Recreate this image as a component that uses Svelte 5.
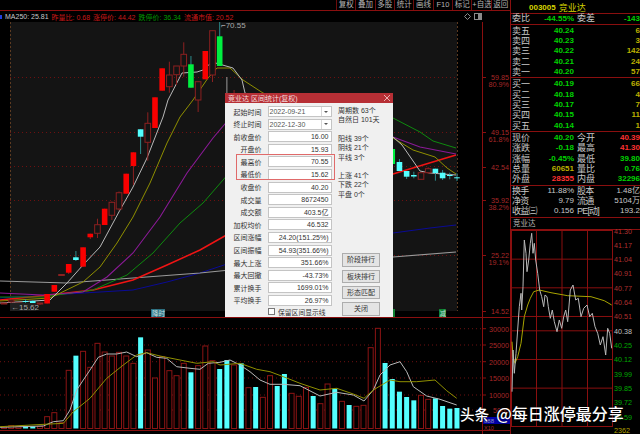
<script>
  // toolbar + legend
  const tools = ["复权", "叠加", "多股", "统计", "画线", "F10", "标记", "+自选", "返回"];

  const sells = [["卖五", "40.24", "6"], ["卖四", "40.23", "3"], ["卖三", "40.22", "142"], ["卖二", "40.21", "24"], ["卖一", "40.20", "57"]];
  const buys = [["买一", "40.19", "66"], ["买二", "40.18", "4"], ["买三", "40.17", "7"], ["买四", "40.15", "11"], ["买五", "40.14", "1"]];
  const stats = [
    ["现价", "40.20", "g", "今开", "40.39", "r"],
    ["涨跌", "-0.18", "g", "最高", "41.30", "r"],
    ["涨幅", "-0.45%", "g", "最低", "39.80", "g"],
    ["总量", "60651", "y", "量比", "0.76", "g"],
    ["外盘", "28355", "r", "内盘", "32296", "g"],
  ];
  const extra = [
    ["换手", "11.88%", "股本", "1.48亿"],
    ["净资", "9.79", "流通", "5104万"],
    ["收益㈢", "0.156", "PE[动]", "193.2"],
  ];

  // dialog
  const fields = [
    ["前收盘价", "16.00"], ["开盘价", "15.93"], ["最高价", "70.55"], ["最低价", "15.62"],
    ["收盘价", "40.20"], ["成交量", "8672450"], ["成交额", "403.5亿"], ["加权均价", "46.532"],
    ["区间涨幅", "24.20(151.25%)"], ["区间振幅", "54.93(351.66%)"], ["最大上涨", "351.66%"],
    ["最大回撤", "-43.73%"], ["累计换手", "1699.01%"], ["平均换手", "26.97%"],
  ];
  const statGroups = [
    ["周期数 63个", "自然日 101天"],
    ["阳线 39个", "阴线 21个", "平线 3个"],
    ["上涨 41个", "下跌 22个", "平盘 0个"],
  ];
  const actions = ["阶段排行", "板块排行", "形态匹配", "关闭"];

  const barX = (i) => 4 + 7.19 * i;

  // [index, body top, body bottom, wick top, wick bottom, kind]
  const candles = [
    [0, 303, 304, 303, 304, "h"], [1, 300, 302, 299, 304, "h"], [2, 303, 304, 303, 304, "h"],
    [3, 301, 302, 299, 304, "c"], [4, 301, 303, 300, 304, "c"], [5, 303, 304, 303, 305, "h"],
    [6, 294, 303.5, 294, 303.5, "s"], [7, 285, 291.7, 285, 291.7, "s"], [8, 274.5, 275.5, 274.5, 275.5, "h"],
    [9, 264, 272.7, 264, 274, "s"], [10, 257.3, 260, 251, 261, "c"], [11, 247.3, 266.7, 247.3, 266.7, "s"],
    [12, 233.7, 237.3, 233.7, 239, "s"], [13, 224.7, 233.3, 218.7, 238, "h"], [14, 208.7, 225, 208.7, 225, "s"],
    [15, 202.3, 215.3, 201.5, 220, "h"], [16, 192.7, 209, 191.5, 210.5, "h"], [17, 173.7, 193.7, 173.7, 193.7, "s"],
    [18, 152.3, 166, 152.3, 185, "s"], [19, 129.3, 136.7, 129.3, 154, "c"], [20, 123.3, 142.3, 112.3, 160.7, "h"],
    [21, 97.3, 128, 97.3, 128, "s"], [22, 68.3, 90.7, 68.3, 90.7, "s"], [23, 75, 86.7, 61.7, 92.7, "h"],
    [24, 66, 74.7, 66, 85, "h"], [25, 54.3, 66, 42.3, 76.7, "h"], [26, 64.3, 87.7, 56, 87.7, "g"],
    [27, 81.7, 100, 81.7, 112, "h"], [28, 51, 79.3, 51, 79.3, "s"], [29, 30.7, 75, 30.7, 82, "h"],
    [30, 36.3, 66, 21.7, 66, "g"], [31, 110, 120, 77, 125, "w"], [32, 100, 110, 90, 112, "h"],
    [54, 149, 164, 145, 164, "g"], [55, 162, 171, 159, 171, "c"], [56, 171, 176.7, 171, 179, "c"],
    [57, 175, 176.5, 171.7, 178.3, "c"], [58, 172.7, 179.3, 172.7, 179.3, "h"], [59, 168.7, 172.7, 167.3, 174, "h"],
    [60, 168.7, 173, 168.7, 180.7, "c"], [61, 172.7, 178.3, 170, 180, "c"], [62, 175, 176, 172.7, 179.3, "c"],
    [63, 177.3, 178.3, 173.3, 181, "c"],
  ];

  // main chart averages, screen coordinates; the dialog hides the middle part
  const ma = [
    { cls: "l-blue", w: 1, pts: "0,298 67,294 133,290 167,282 200,273 230,263 393,233 430,228 456,225" },
    { cls: "l-grey", w: 1.2, pts: "0,281 67,283 133,278 200,273 230,270 393,257 456,252" },
    { cls: "l-red", w: 1.5, pts: "0,300 50,295 93,290 133,280 167,265 200,250 230,233 393,174 456,155" },
    { cls: "l-green", w: 1, pts: "0,297 43,297 93,290 127,275 153,253 180,223 203,203 230,172 300,110 393,118 420,132 433,141 456,148" },
    { cls: "l-purple", w: 1.1, pts: "0,293 43,295 83,292 107,277 133,253 160,217 187,173 213,138 230,118 300,100 393,137 420,147 456,154" },
    { cls: "l-olive", w: 1, pts: "0,301 50,298 83,282 100,267 117,243 133,217 150,183 167,143 180,117 193,100 208,78 217,68 230,68 243,80 263,93 330,118 393,138 413,150 435,157 447,168 456,174" },
    { cls: "l-white", w: 1, pts: "0,303 50,300 67,283 83,265 100,247 120,210 133,187 147,158 163,117 168,100 182,73 197,72 203,70 212,62 233,68 242,80 245,93 280,110 393,137 402,145 420,171 430,173 456,175" },
  ];

  const mainGrid = [77, 132, 166, 200, 255];
  const mainAxis = [
    ["59.85", 77, "80.9%", 83.5], ["49.15", 132, "61.8%", 138.5], ["42.54", 167], ["35.92", 200, "38.2%", 206.5],
    ["25.22", 255, "19.1%", 261.5], ["14.52", 311],
  ];

  // volume bars: top in screen px, c = falling
  const volTops = [
    [380], [377], [380], [378, 1], [379, 1], [379], [350], [338], [368], [211], [167, 1], [154], [202], [130], [156], [168],
    [157], [168], [190], [112, 1], [150], [234], [170], [212], [227], [190], [217, 1], [197], [138], [182], [207, 1], [180, 1],
    [195], [190, 1], [263], [261, 1], [292], [227], [258, 1], [222, 1], [280], [289], [262], [288, 1], [311], [252], [266, 1],
    [304], [315, 1], [319], [316], [143], [85], [189, 1], [237, 1], [275, 1], [291, 1], [301, 1], [286], [298], [295, 1],
    [318, 1], [326, 1], [324, 1],
  ].map(([t, c], i) => ({ x: barX(i), top: 300 + t / 3, c: !!c }));

  const volGrid = [["30000", 328.7], ["25000", 345], ["20000", 361.7], ["15000", 378], ["10000", 395], ["5000", 410]];

  // zoomed readings converted back to screen px
  const scale = (list, dx, dy) => list.map(([x, y]) => `${(dx + x / 3).toFixed(1)},${(dy + y / 3).toFixed(1)}`).join(" ");

  const volWhite = scale([[0,382],[130,378],[160,365],[190,362],[210,330],[230,270],[250,240],[270,210],[295,172],[320,162],[350,162],[380,156],[410,170],[440,158],[470,172],[500,175],[530,200],[570,205],[600,208],[625,190],[660,187],[690,180],[720,195],[750,215],[780,240],[810,253],[850,253],[900,257],[960,288],[1010,277],[1060,285],[1092,303],[1120,270],[1140,225],[1170,195],[1200,185],[1220,215],[1240,260],[1280,288],[1320,298],[1370,315]], 0, 300);
  const volOlive = scale([[0,380],[150,372],[190,370],[220,335],[270,295],[320,235],[370,195],[410,165],[440,158],[480,168],[540,180],[590,190],[640,185],[660,195],[720,190],[770,208],[810,215],[850,230],[900,250],[960,270],[1010,265],[1060,282],[1092,295],[1120,270],[1170,240],[1200,245],[1250,245],[1305,240],[1340,272],[1370,295]], 0, 300);

  // intraday panel, screen px minus the panel origin (510, 230)
  const dayPrice = scale([[63,545],[66,420],[70,490],[75,430],[85,290],[90,250],[92,300],[96,230],[100,90],[105,130],[108,185],[113,150],[118,100],[122,70],[126,130],[130,100],[134,150],[140,190],[146,240],[152,260],[158,290],[162,255],[168,260],[172,290],[178,325],[184,300],[190,335],[198,365],[205,330],[212,355],[218,320],[224,300],[230,335],[238,240],[246,225],[254,270],[262,265],[270,320],[278,295],[288,285],[296,320],[304,310],[312,350],[320,370],[328,405],[336,380],[344,435],[350,355],[356,370],[362,415]], -20, -20);
  const dayAvg = scale([[63,395],[66,440],[72,460],[80,440],[90,400],[100,320],[110,285],[118,265],[128,245],[145,240],[180,248],[230,257],[300,260],[340,272],[362,285]], -20, -20);

  const dayAxis = [
    ["41.30", "r"], ["41.17", "r"], ["41.04", "r"], ["40.91", "r"], ["40.77", "r"], ["40.64", "r"], ["40.51", "r"],
    ["40.38", "n"], ["40.25", "g"], ["40.12", "g"], ["39.99", "g"], ["39.85", "g"], ["39.72", "g"], ["39.59", "g"],
  ];
  const dayRows = [2, 4, 6, 7, 9, 11];
  const dayCols = [25.5, 51, 76.5];
</script>

<div class="screen">
  <div class="left">
    <div class="toolbar">
      {#each tools as tool}
        <span class="tool">{tool}</span>
      {/each}
    </div>

    <div class="legend">
      <span class="marker"></span>
      <span class="ma">MA250: 25.81</span>
      <span class="red">昨量比: 0.68</span>
      <span class="red">涨停价: 44.42</span>
      <span class="grn">跌停价: 36.34</span>
      <span class="red">流通市值: 20.52</span>
      <span class="legend-icons">
        <svg width="7" height="7" viewBox="0 0 7 7"><path d="M3.5.5 6.5 3.5 3.5 6.5.5 3.5Z" fill="none" stroke="#8a8a8a" /></svg>
        <svg width="8" height="7" viewBox="0 0 8 7"><rect x=".5" y=".5" width="7" height="6" fill="none" stroke="#8a8a8a" /><rect x="4" y="1" width="3" height="5" fill="#8a8a8a" /></svg>
      </span>
    </div>

    <div class="charts">
      <svg class="canvas" width="510" height="412" viewBox="0 22 510 412">
        <rect x="10" y="22" width="447" height="289" fill="#141414" />
        <line x1="10.5" y1="22" x2="10.5" y2="311" class="edge" />
        <line x1="457.5" y1="22" x2="457.5" y2="311" class="edge" />
        {#each mainGrid as y}
          <line x1="10" y1={y + 0.5} x2="457" y2={y + 0.5} class="dots" />
        {/each}

        {#each ma as line}
          <polyline points={line.pts} class={line.cls} stroke-width={line.w} fill="none" />
        {/each}

        {#each candles as [i, top, bottom, wickTop, wickBottom, kind]}
          <line x1={barX(i)} y1={wickTop} x2={barX(i)} y2={wickBottom} class="wick-{kind}" />
          <rect x={barX(i) - 2.8} y={top} width="5.6" height={bottom - top} class="body-{kind}" />
        {/each}

        <text x="221" y="28" class="note">⌐70.55</text>
        <rect x="10" y="303" width="26" height="8" fill="#202020" />
        <text x="11" y="309.5" class="note">←15.62</text>

        <rect x="151" y="309" width="14" height="8" fill="#2d6f80" />
        <text x="152" y="315.5" class="tag">降时</text>
        <rect x="393" y="309" width="2" height="8" fill="#108030" />
        <rect x="439" y="309" width="7" height="8" fill="#108030" />
        <text x="439.5" y="315.5" class="tag">减</text>

        <line x1="0" y1="317.5" x2="510" y2="317.5" class="frame" />
        <line x1="0" y1="430.5" x2="510" y2="430.5" class="frame" />
        <line x1="482.5" y1="11" x2="482.5" y2="434" class="frame" />

        {#each mainAxis as [label, y, pct, pctY]}
          <line x1="482" y1={y + 0.5} x2="486" y2={y + 0.5} class="frame" />
          <text x="509" y={y + 3} class="axis">{label}</text>
          {#if pct}
            <text x="509" y={pctY + 3} class="axis">{pct}</text>
          {/if}
        {/each}

        {#each volGrid as [label, y]}
          <line x1="0" y1={y} x2="482" y2={y} class="dots" />
          <line x1="482" y1={y} x2="486" y2={y} class="frame" />
          <text x="509" y={y + 3} class="axis">{label}</text>
        {/each}
        <rect x="483" y="417" width="27" height="7" fill="#0000a8" />
        <text x="484" y="423.2" class="axis-b">888</text>
        <text x="484" y="429.5" class="axis-s">X10</text>

        {#each volTops as bar}
          <rect x={bar.x - 2.5} y={bar.top} width="5" height={428.5 - bar.top} class={bar.c ? "vol-c" : "vol-r"} />
        {/each}
        <polyline points={volWhite} class="l-white" fill="none" />
        <polyline points={volOlive} class="l-olive" fill="none" />
      </svg>

      <div class="dialog">
        <div class="title">
          <span>竞业达 区间统计(复权)</span>
          <svg width="6" height="6" viewBox="0 0 6 6"><path d="M0 0 6 6M6 0 0 6" stroke="#e8b0b0" stroke-width="1" /></svg>
        </div>
        <div class="dialog-body">
          <div class="fields">
            <div class="field">
              <label>起始时间</label>
              <div class="combo"><span>2022-09-21</span><b></b></div>
            </div>
            <div class="field">
              <label>终止时间</label>
              <div class="combo"><span>2022-12-30</span><b></b></div>
            </div>
            {#each fields as [name, value]}
              <div class="field">
                <label>{name}</label>
                <div class="value">{value}</div>
              </div>
            {/each}
            <div class="keep"><i></i><span>保留区间显示线</span></div>
            <div class="highlight"></div>
          </div>
          <div class="side">
            {#each statGroups as group}
              <div class="stat-group">
                {#each group as line}<div>{line}</div>{/each}
              </div>
            {/each}
            <div class="actions">
              {#each actions as action}<button>{action}</button>{/each}
            </div>
          </div>
        </div>
      </div>
    </div>
  </div>

  <div class="right">
    <div class="name"><span>003005</span><span class="name-cn">竞业达</span></div>

    <div class="block-first row4">
      <span>委比</span><em class="g">-44.55%</em><span class="l2">委差</span><em class="g">-143</em>
    </div>

    <div class="block">
      {#each sells as [n, p, v]}
        <div class="row3"><span>{n}</span><em class="g">{p}</em><em class="y">{v}</em></div>
      {/each}
    </div>
    <div class="block">
      {#each buys as [n, p, v]}
        <div class="row3"><span>{n}</span><em class="g">{p}</em><em class="y">{v}</em></div>
      {/each}
    </div>
    <div class="block">
      {#each stats as [a, av, ac, b, bv, bc]}
        <div class="row4"><span>{a}</span><em class={ac}>{av}</em><span class="l2">{b}</span><em class={bc}>{bv}</em></div>
      {/each}
    </div>
    <div class="block short">
      {#each extra as [a, av, b, bv]}
        <div class="row4"><span class="tight">{a}</span><em>{av}</em><span class="l2 tight">{b}</span><em>{bv}</em></div>
      {/each}
    </div>

    <div class="day-name">竞业达</div>

    <svg class="day" width="130" height="204" viewBox="0 0 130 204">
      <rect x="0.5" y="0.5" width="101" height="196" class="frame" fill="none" />
      {#each dayRows as r}
        <line x1="1" y1={r * 14.33 + 0.5} x2="101" y2={r * 14.33 + 0.5} class="frame" />
      {/each}
      {#each dayCols as x}
        <line x1={x} y1="0" x2={x} y2="196" class="frame" />
      {/each}
      <polyline points={dayAvg} class="l-day-avg" fill="none" />
      <polyline points={dayPrice} class="l-white" fill="none" />
      {#each dayAxis as [label, tone], i}
        <text x="103" y={i * 14.33 + 3.5} class="day-axis {tone}">{label}</text>
      {/each}
      <text x="103" y="203" class="day-axis y">2362</text>
    </svg>
  </div>

  <div class="watermark">头条<span>@每日涨停最分享</span></div>
</div>

<style>
  :global(body) {
    margin: 0;
    background: #000;
  }
  .screen {
    position: relative;
    display: flex;
    width: 640px;
    height: 434px;
    overflow: hidden;
    background: #000;
    font-family: "Liberation Sans", "Noto Sans CJK SC", sans-serif;
    color: #c8c8c8;
  }
  .left {
    width: 510px;
    flex: none;
    border-right: 1px solid #8a0f0f;
    box-sizing: content-box;
  }
  .toolbar {
    display: flex;
    justify-content: flex-end;
    height: 10px;
    border-bottom: 1px solid #8a0f0f;
  }
  .tool {
    width: 19.33px;
    box-sizing: border-box;
    border-left: 1px solid #6c0c0c;
    font-size: 7.5px;
    line-height: 10px;
    text-align: center;
    white-space: nowrap;
    color: #b4b4b4;
  }
  .legend {
    display: flex;
    align-items: center;
    gap: 3px;
    height: 11px;
    font-size: 7px;
    white-space: nowrap;
  }
  .marker {
    width: 1.5px;
    height: 4px;
    margin-right: 0.5px;
    background: #2040e0;
  }
  .ma {
    color: #c8c8c8;
  }
  .red {
    color: #c81818;
  }
  .grn {
    color: #009a00;
  }
  .legend-icons {
    display: flex;
    gap: 3px;
    margin-left: auto;
    margin-right: 28px;
  }
  .charts {
    position: relative;
  }
  .canvas,
  .day {
    display: block;
  }
  .day {
    overflow: visible;
  }
  .edge {
    stroke: #5c3a20;
    stroke-dasharray: 2 2;
  }
  .dots {
    stroke: #6e1010;
    stroke-dasharray: 1 3;
  }
  .frame {
    stroke: #8a0f0f;
  }
  .l-blue {
    stroke: #0a0a96;
  }
  .l-grey {
    stroke: #9a9a9a;
  }
  .l-red {
    stroke: #f01414;
  }
  .l-green {
    stroke: #0e8a0e;
  }
  .l-purple {
    stroke: #8a1a96;
  }
  .l-olive {
    stroke: #8f8f00;
  }
  .l-white {
    stroke: #b8b8b8;
  }
  .l-day-avg {
    stroke: #a8a400;
  }
  .wick-s,
  .wick-h {
    stroke: #8c2020;
  }
  .wick-c,
  .wick-g {
    stroke: #2c8c8c;
  }
  .wick-w {
    stroke: #9a9a9a;
  }
  .body-s {
    fill: #fa0000;
  }
  .body-h {
    fill: #141414;
    stroke: #8c2020;
  }
  .body-c {
    fill: #54ffff;
  }
  .body-g {
    fill: #00f040;
  }
  .body-w {
    fill: none;
  }
  .vol-r {
    fill: #000;
    stroke: #8c1414;
  }
  .vol-c {
    fill: #54ffff;
  }
  .note {
    font-size: 8px;
    fill: #a8a8a8;
  }
  .tag {
    font-size: 6.5px;
    fill: #c8e0e0;
  }
  .axis {
    font-size: 7.2px;
    text-anchor: end;
    fill: #a82828;
  }
  .axis-b {
    font-size: 6px;
    fill: #9090c0;
  }
  .axis-s {
    font-size: 5.5px;
    fill: #a82828;
  }

  /* dialog sits over the chart */
  .dialog {
    position: absolute;
    left: 225px;
    top: 71px;
    width: 168px;
    height: 224px;
    display: flex;
    flex-direction: column;
    background: #f0f0f0;
    color: #333;
    font-size: 7px;
  }
  .title {
    display: flex;
    align-items: center;
    justify-content: space-between;
    height: 10px;
    padding: 0 3px 0 3px;
    background: #b72f35;
    color: #f4dede;
    font-size: 7px;
  }
  .dialog-body {
    flex: 1;
    display: flex;
    padding: 3px 0 2.5px;
  }
  .fields {
    position: relative;
    width: 107px;
    display: flex;
    flex-direction: column;
    gap: 1.6px;
  }
  .field {
    display: flex;
    align-items: center;
    height: 11px;
  }
  .field label {
    width: 36.5px;
    text-align: right;
    white-space: nowrap;
  }
  .value,
  .combo {
    width: 64px;
    height: 11px;
    margin-left: 6px;
    box-sizing: border-box;
    background: #fff;
    border: 1px solid #c4c4c4;
    line-height: 9px;
  }
  .value {
    padding-right: 2px;
    text-align: right;
    white-space: nowrap;
  }
  .combo {
    display: flex;
    justify-content: space-between;
    padding-left: 1px;
    color: #555;
  }
  .combo b {
    position: relative;
    width: 9px;
    border-left: 1px solid #d8d8d8;
  }
  .combo b::after {
    content: "";
    position: absolute;
    left: 2.5px;
    top: 3.5px;
    border: 2px solid transparent;
    border-top: 2px solid #555;
  }
  .keep {
    display: flex;
    align-items: center;
    gap: 3px;
    height: 8px;
    margin-left: 43px;
    font-size: 6.8px;
    white-space: nowrap;
  }
  .keep i {
    width: 5px;
    height: 5px;
    background: #fff;
    border: 1px solid #777;
  }
  .highlight {
    position: absolute;
    left: 11px;
    top: 47.5px;
    width: 99px;
    height: 26px;
    border: 1px solid #e06a6a;
    box-sizing: border-box;
  }
  .side {
    flex: 1;
    display: flex;
    flex-direction: column;
    padding-left: 6px;
    line-height: 9.4px;
    white-space: nowrap;
  }
  .stat-group {
    margin-bottom: 9px;
  }
  .actions {
    display: flex;
    flex-direction: column;
    gap: 3px;
    margin-top: auto;
    margin-left: 4px;
  }
  .actions button {
    width: 38px;
    height: 13.3px;
    padding: 0;
    background: #e4e4e4;
    border: 1px solid #adadad;
    font: inherit;
    color: #333;
  }

  .right {
    flex: 1;
    font-size: 9px;
  }
  .name {
    display: flex;
    align-items: center;
    gap: 3px;
    padding-left: 18px;
    padding-top: 1px;
    box-sizing: border-box;
    height: 14px;
    border-bottom: 1px solid #8a0f0f;
    color: #d6d600;
    font-size: 8px;
    font-weight: bold;
  }
  .name-cn {
    font-size: 9px;
    font-weight: normal;
  }
  .block-first {
    height: 10.5px;
    padding-left: 1px;
    box-sizing: border-box;
    border-bottom: 1px solid #8a0f0f;
  }
  .block {
    height: 53.7px;
    box-sizing: border-box;
    padding: 1.2px 0 0 1px;
    border-bottom: 1px solid #8a0f0f;
  }
  .block.short {
    height: 32.2px;
    padding-top: 0;
  }
  .row3,
  .row4 {
    display: grid;
    height: 10.3px;
    line-height: 10.3px;
    white-space: nowrap;
  }
  .block-first.row4 {
    height: 10.5px;
    line-height: 9.5px;
  }
  .row3 {
    grid-template-columns: 20px 43px 1fr;
  }
  .row4 {
    grid-template-columns: 20px 43px 22px 1fr;
  }
  .tight {
    letter-spacing: -0.8px;
  }
  .l2 {
    padding-left: 2px;
  }
  em {
    font-style: normal;
    font-size: 8px;
    text-align: right;
    padding-right: 1px;
    color: #c8c8c8;
  }
  em.g {
    color: #00d200;
    font-weight: bold;
  }
  em.r {
    color: #ff3030;
    font-weight: bold;
  }
  em.y {
    color: #bcb000;
    font-weight: bold;
  }
  .day-name {
    height: 12.5px;
    box-sizing: border-box;
    padding-left: 2px;
    border-bottom: 1px solid #8a0f0f;
    font-size: 7.5px;
    line-height: 11.5px;
    color: #b4b4b4;
  }
  .day-axis {
    font-size: 7.2px;
  }
  .day-axis.r {
    fill: #b03030;
  }
  .day-axis.n {
    fill: #c0c0c0;
  }
  .day-axis.g {
    fill: #00a800;
  }
  .day-axis.y {
    fill: #b0a000;
  }

  .watermark {
    position: absolute;
    left: 460px;
    top: 403px;
    font-family: "Noto Sans CJK SC", sans-serif;
    font-size: 14.6px;
    line-height: 20px;
    font-weight: 500;
    color: #fff;
    white-space: nowrap;
    text-shadow: 0 0 2px #000;
  }
  .watermark span {
    margin-left: 7px;
    font-size: 16px;
  }
</style>
